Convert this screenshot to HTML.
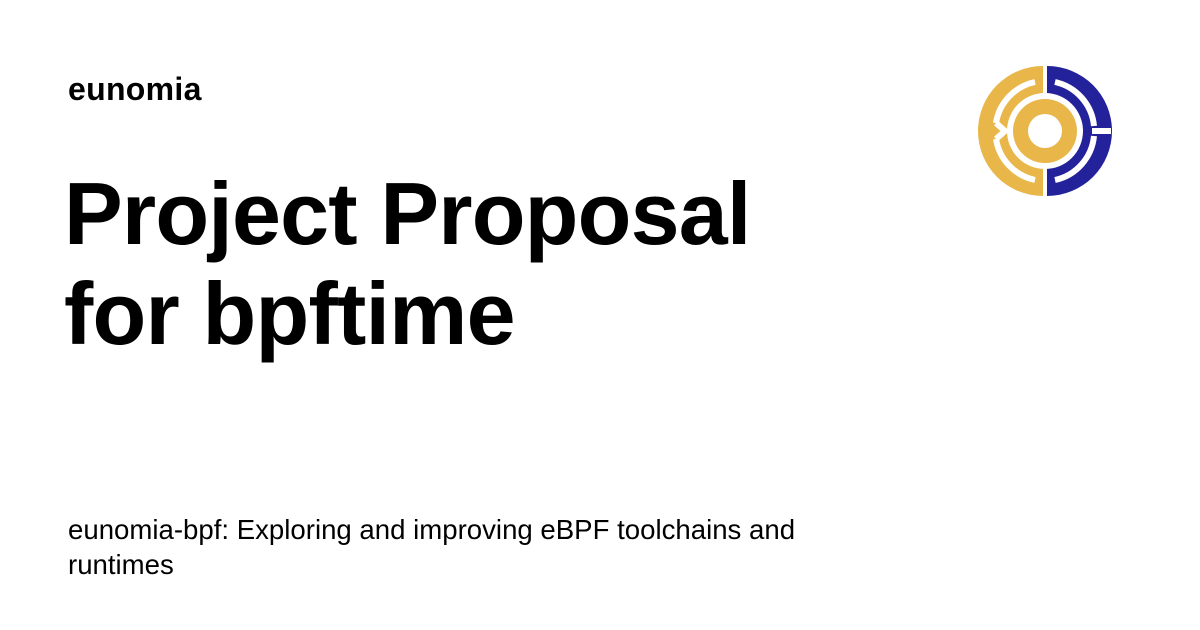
<!DOCTYPE html>
<html><head><meta charset="utf-8"><style>
html,body{margin:0;padding:0;background:#fff;}
body{width:1200px;height:630px;position:relative;overflow:hidden;font-family:"Liberation Sans",sans-serif;color:#000;}
.brand{position:absolute;left:68px;top:69px;font-size:32px;font-weight:bold;line-height:40px;letter-spacing:0.3px;}
h1{position:absolute;left:64px;top:164px;margin:0;font-size:88px;font-weight:bold;line-height:100px;letter-spacing:-0.8px;}
.sub{position:absolute;left:68px;top:512px;font-size:27.6px;line-height:35px;width:800px;}
svg{position:absolute;left:975px;top:61px;}
</style></head><body>
<div class="brand">eunomia</div>
<h1>Project Proposal<br>for bpftime</h1>
<div class="sub">eunomia-bpf: Exploring and improving eBPF toolchains and<br>runtimes</div>
<svg width="140" height="140" viewBox="0 0 140 140">
  <path d="M68 5 A65 65 0 0 0 68 135 Z" fill="#E9B64A"/>
  <path d="M72 5 A65 65 0 0 1 72 135 Z" fill="#23229A"/>
  <g fill="none" stroke="#fff" stroke-width="6">
    <path d="M60 21 A50 50 0 0 0 21 62"/>
    <path d="M21 78 A50 50 0 0 0 60 119"/>
    <path d="M21 62 L30 70 L21 78"/>
    <path d="M80 21 A50 50 0 0 1 119 65"/>
    <path d="M119 75 A50 50 0 0 1 80 119"/>
    <path d="M117 70 L136 70"/>
  </g>
  <circle cx="70" cy="70" r="38" fill="#fff"/>
  <circle cx="70" cy="70" r="32" fill="#E9B64A"/>
  <circle cx="70" cy="70" r="17" fill="#fff"/>
  <rect x="68" y="0" width="4" height="32" fill="#fff"/>
  <rect x="68" y="108" width="4" height="32" fill="#fff"/>
</svg>
</body></html>
